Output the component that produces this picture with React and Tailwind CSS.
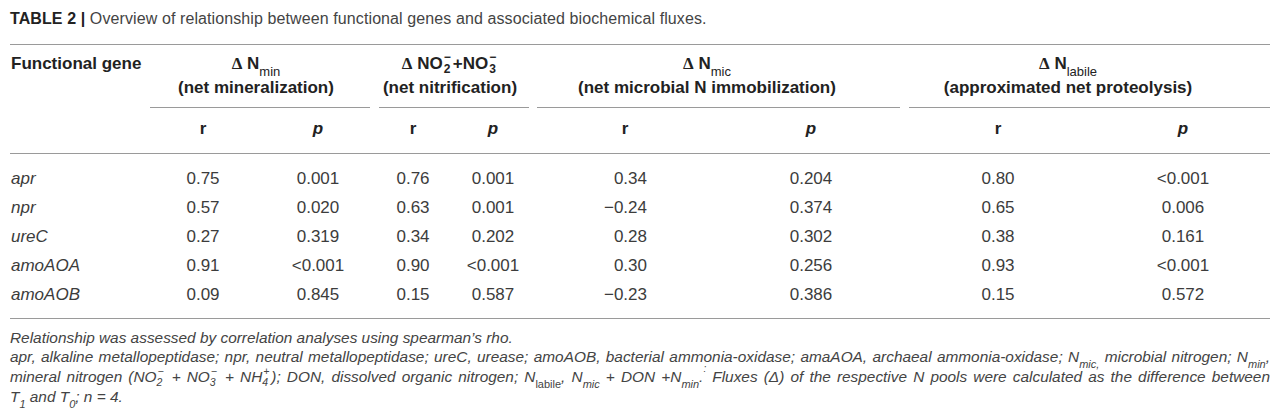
import React from "react";

const rows = [
  ["apr", "0.75", "0.001", "0.76", "0.001", "0.34", "0.204", "0.80", "<0.001"],
  ["npr", "0.57", "0.020", "0.63", "0.001", "\u22120.24", "0.374", "0.65", "0.006"],
  ["ureC", "0.27", "0.319", "0.34", "0.202", "0.28", "0.302", "0.38", "0.161"],
  ["amoAOA", "0.91", "<0.001", "0.90", "<0.001", "0.30", "0.256", "0.93", "<0.001"],
  ["amoAOB", "0.09", "0.845", "0.15", "0.587", "\u22120.23", "0.386", "0.15", "0.572"],
];

const grid = "grid grid-cols-[140px_106px_124px_66px_94px_170px_202px_172px_186px]";

/* stacked sub/superscript for the 17px header */
function HStack({ sup, sub }) {
  return (
    <span className="relative inline-block w-[10px] h-[12px]">
      <span className="absolute left-[1px] top-[-6px] text-[12px] leading-none">{sup}</span>
      <span className="absolute left-[1px] top-[6px] text-[12px] leading-none">{sub}</span>
    </span>
  );
}

/* stacked sub/superscript for the footnote */
function FStack({ sup, sub }) {
  return (
    <span className="relative inline-block w-[9px] h-[11px]">
      <span className="absolute left-[1px] top-[-5px] text-[10.5px] leading-none">{sup}</span>
      <span className="absolute left-[0px] top-[6px] text-[10.5px] leading-none">{sub}</span>
    </span>
  );
}

function Delta() {
  return <span className="font-['Liberation_Serif',serif] font-bold">Δ</span>;
}

function Sub({ children }) {
  return <sub className="text-[13px] font-normal align-[-4px] leading-none">{children}</sub>;
}

function FSub({ children, className = "" }) {
  return <sub className={"text-[11px] align-[-3px] leading-none " + className}>{children}</sub>;
}

const bodyCls = [
  "italic pl-[1px]",
  "text-center",
  "text-center",
  "text-center",
  "text-center",
  "text-right pr-[63px]",
  "text-center",
  "text-center",
  "text-center pl-[12px]",
];

export default function App() {
  return (
    <div className="w-[1280px] h-[418px] bg-white px-[10px] pt-[9px] font-['Liberation_Sans',Arial,sans-serif] text-[#444]">
      <div className="text-[16px] leading-[20px] whitespace-nowrap tracking-[0.1px]">
        <span className="font-bold text-[#222]">TABLE 2 | </span>
        <span>Overview of relationship between functional genes and associated biochemical fluxes.</span>
      </div>

      <div className="mt-[15px] h-px bg-[#9a9a9a]" />

      {/* header */}
      <div className={grid + " pt-[7px] text-[17px] font-bold text-[#222] leading-[24px]"}>
        <div className="row-span-3 pl-[1px] whitespace-nowrap">Functional gene</div>
        <div className="col-span-2 flex flex-col items-center pr-[18px]">
          <div className="whitespace-nowrap">
            <Delta /> N<Sub>min</Sub>
          </div>
          <div className="whitespace-nowrap">(net mineralization)</div>
        </div>
        <div className="col-span-2 flex flex-col items-center pr-[20px]">
          <div className="whitespace-nowrap">
            <Delta /> NO<HStack sup="−" sub="2" />+NO<HStack sup="−" sub="3" />
          </div>
          <div className="whitespace-nowrap">(net nitrification)</div>
        </div>
        <div className="col-span-2 flex flex-col items-center pr-[38px]">
          <div className="whitespace-nowrap">
            <Delta /> N<Sub>mic</Sub>
          </div>
          <div className="whitespace-nowrap">(net microbial N immobilization)</div>
        </div>
        <div className="col-span-2 flex flex-col items-center pr-[46px]">
          <div className="whitespace-nowrap">
            <Delta /> N<Sub>labile</Sub>
          </div>
          <div className="whitespace-nowrap">(approximated net proteolysis)</div>
        </div>

        <div className="col-span-2 mt-[7px] mr-[10px] h-px bg-[#9a9a9a]" />
        <div className="col-span-2 mt-[7px] ml-[-1px] mr-[11px] h-px bg-[#9a9a9a]" />
        <div className="col-span-2 mt-[7px] ml-[-3px] mr-[12px] h-px bg-[#9a9a9a]" />
        <div className="col-span-2 mt-[7px] ml-[-3px] h-px bg-[#9a9a9a]" />

        <div className="mt-[9px] text-center">r</div>
        <div className="mt-[9px] text-center italic">p</div>
        <div className="mt-[9px] text-center">r</div>
        <div className="mt-[9px] text-center italic">p</div>
        <div className="mt-[9px] text-center">r</div>
        <div className="mt-[9px] text-center italic">p</div>
        <div className="mt-[9px] text-center">r</div>
        <div className="mt-[9px] text-center italic pl-[12px]">p</div>
      </div>

      <div className="mt-[12px] h-px bg-[#9a9a9a]" />

      {/* body */}
      <div className="pt-[10px] pb-[9px] text-[17px] text-[#3c3c3c]">
        {rows.map((r, i) => (
          <div key={i} className={grid + " h-[29px] items-center"}>
            {r.map((c, j) => (
              <div key={j} className={"whitespace-nowrap " + bodyCls[j]}>
                {c}
              </div>
            ))}
          </div>
        ))}
      </div>

      <div className="h-px bg-[#9a9a9a]" />

      {/* footnote */}
      <div className="pt-[9px] text-[15.4px] leading-[19px] italic text-[#444] whitespace-nowrap">
        <div>Relationship was assessed by correlation analyses using spearman’s rho.</div>
        <div className="text-justify [text-align-last:justify]">
          apr, alkaline metallopeptidase; npr, neutral metallopeptidase; ureC, urease; amoAOB, bacterial ammonia-oxidase; amaAOA, archaeal ammonia-oxidase; N<FSub>mic,</FSub> microbial nitrogen; N<FSub>min</FSub>,
        </div>
        <div className="text-justify [text-align-last:justify]">
          mineral nitrogen (NO<FStack sup="−" sub="2" /> + NO<FStack sup="−" sub="3" /> + NH<FStack sup="+" sub="4" />); DON, dissolved organic nitrogen; N<FSub className="not-italic">labile</FSub>, N<FSub>mic</FSub> + DON +N<FSub>min</FSub>.<sup className="text-[10px] align-[5px] leading-none">:</sup> Fluxes (Δ) of the respective N pools were calculated as the difference between
        </div>
        <div>
          T<FSub>1</FSub> and T<FSub>0</FSub>; n = 4.
        </div>
      </div>
    </div>
  );
}
